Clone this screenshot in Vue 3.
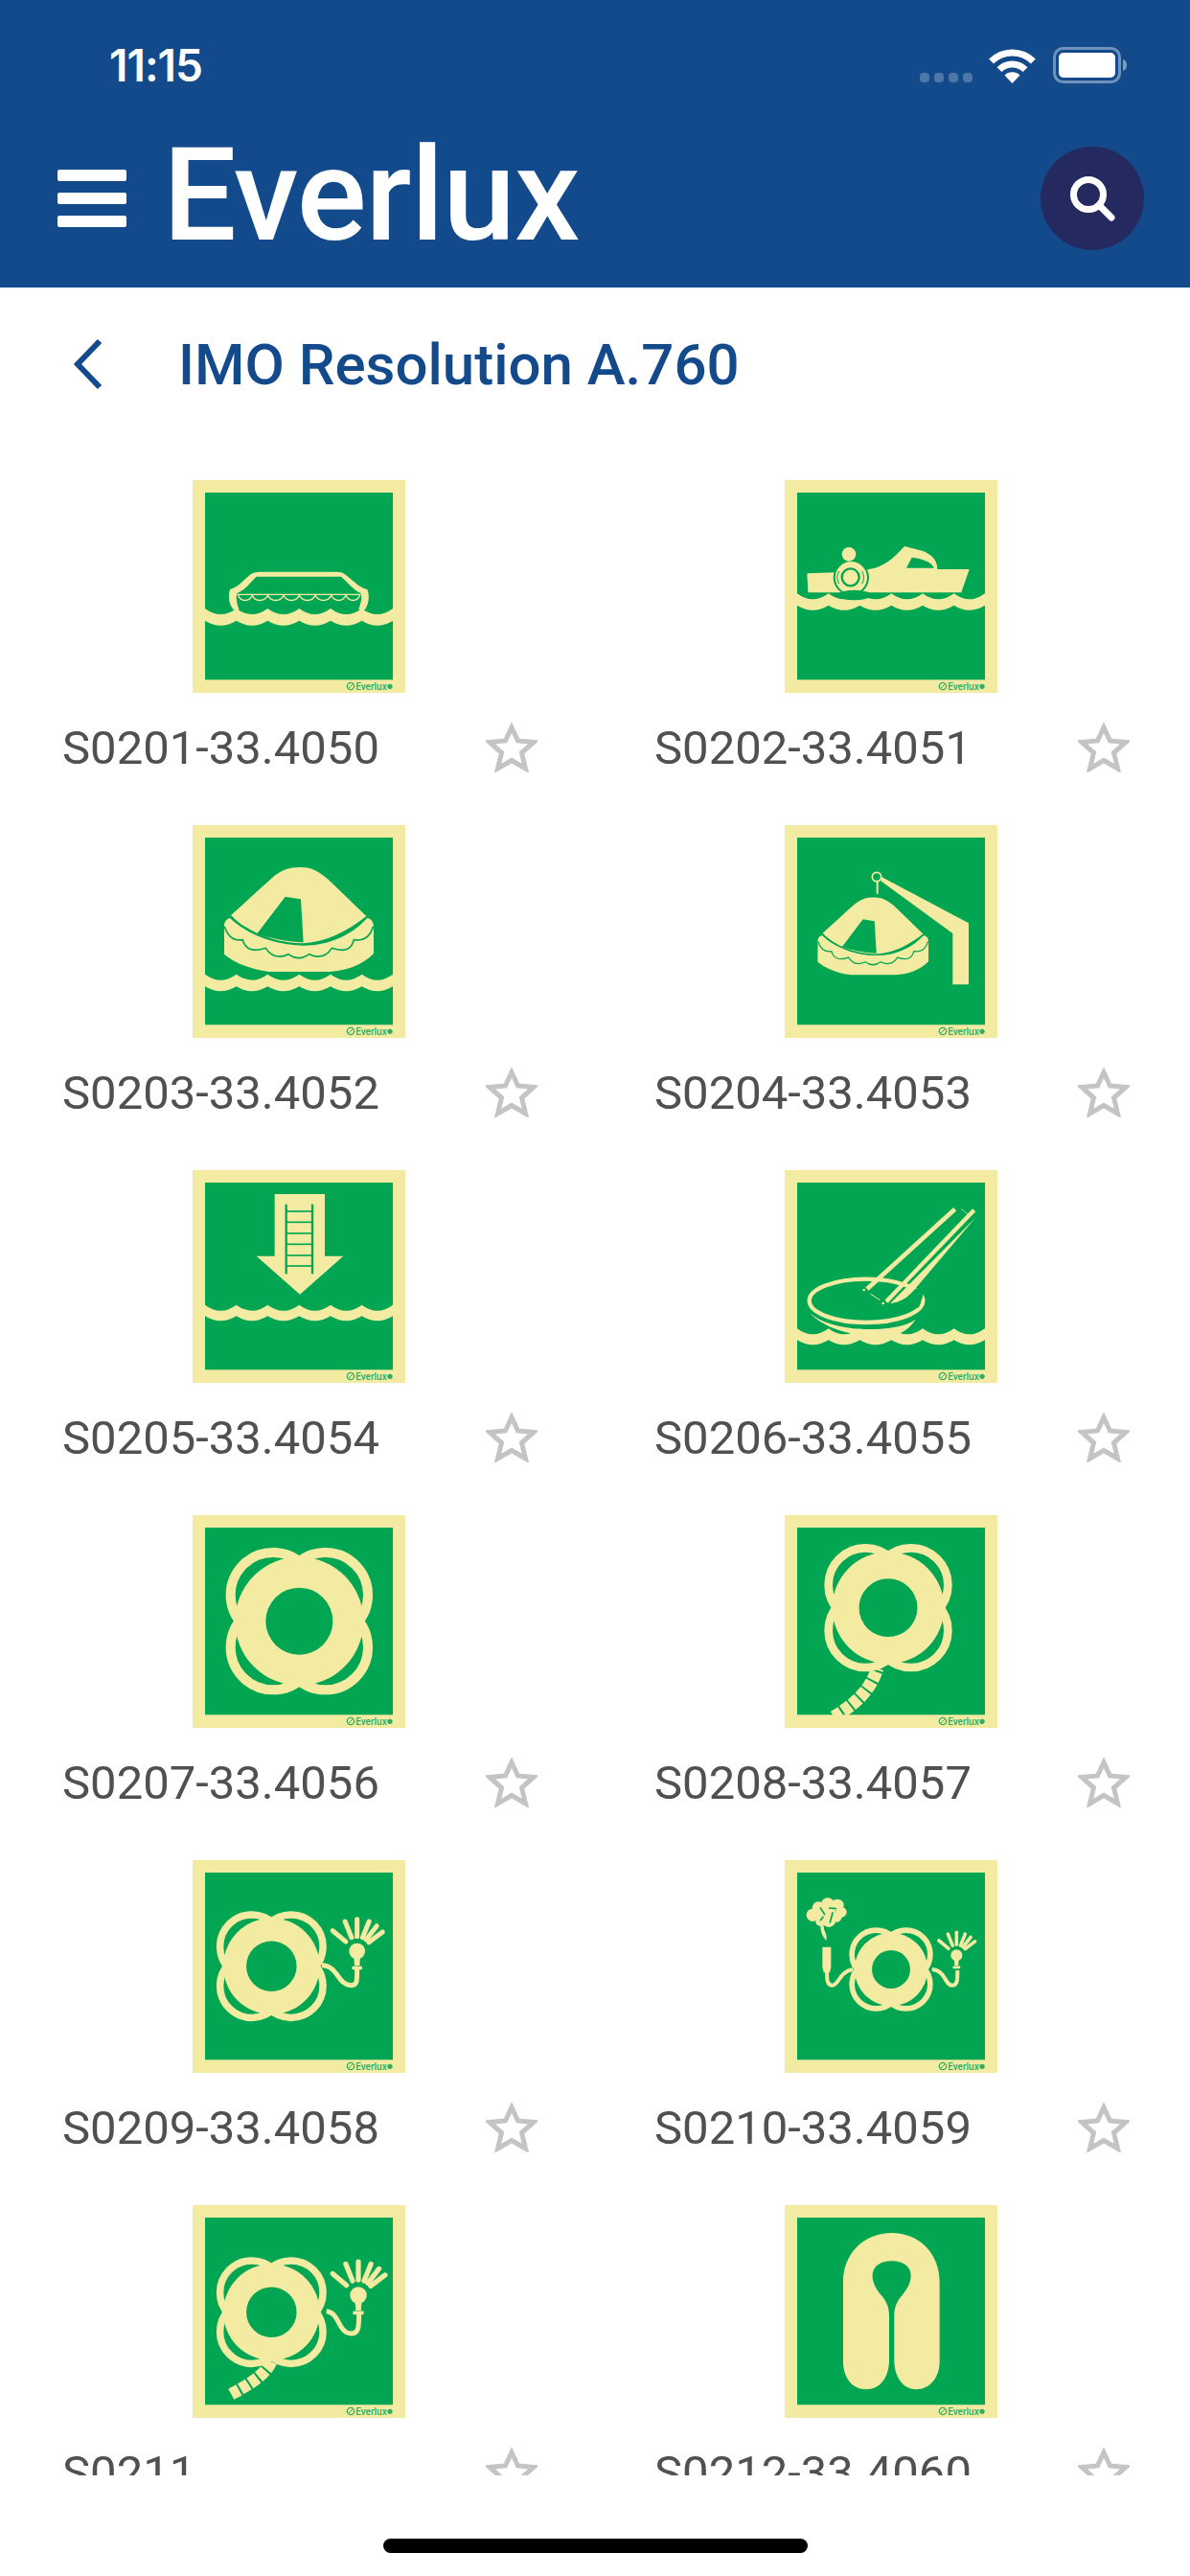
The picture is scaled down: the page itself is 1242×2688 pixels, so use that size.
<script setup>
const Y = '#f4eba3';
const G = '#02a652';

const path = (d, fill = Y) => ({ tag: 'path', attrs: { d, fill } });
const line = (d, w, stroke = Y, cap = 'butt', extra = {}) => ({
  tag: 'path',
  attrs: { d, fill: 'none', stroke, 'stroke-width': w, 'stroke-linecap': cap, ...extra }
});
const circle = (cx, cy, r, fill = Y) => ({ tag: 'circle', attrs: { cx, cy, r, fill } });
const hoop = (cx, cy, r, w, stroke = Y) => ({
  tag: 'circle',
  attrs: { cx, cy, r, fill: 'none', stroke, 'stroke-width': w }
});

// scalloped water band, y = height of the top cusps
const wave = (y, t = 35) => {
  const xs = [39, 137, 235, 334, 432, 530, 627];
  let d = `M39,${y}`;
  for (let i = 1; i < xs.length; i++) {
    d += ` Q${(xs[i - 1] + xs[i]) / 2},${y + 36} ${xs[i]},${y}`;
  }
  d += ` L627,${y + t}`;
  for (let i = xs.length - 2; i >= 0; i--) {
    d += ` Q${(xs[i + 1] + xs[i]) / 2},${y + t + 30} ${xs[i]},${y + t}`;
  }
  return path(d + ' Z');
};

// lifebuoy: four loops behind a disc
const ring = (cx, cy, s) => {
  const o = 82 * s;
  return [
    hoop(cx - o, cy - o, 133 * s, 30 * s),
    hoop(cx + o, cy - o, 133 * s, 30 * s),
    hoop(cx - o, cy + o, 133 * s, 30 * s),
    hoop(cx + o, cy + o, 133 * s, 30 * s),
    circle(cx, cy, 201 * s),
    circle(cx, cy, 105 * s, G)
  ];
};

// light on a lifebuoy, cx/cy is the bulb
const flare = (cx, cy, s) => {
  const rays = [-50, -22, 0, 22, 38, 53].map((a) => {
    const r = (a * Math.PI) / 180;
    const x0 = cx + Math.sin(r) * 46 * s;
    const y0 = cy - Math.cos(r) * 46 * s;
    const x1 = cx + Math.sin(r) * 100 * s;
    const y1 = cy - Math.cos(r) * 100 * s;
    return line(`M${x0},${y0} L${x1},${y1}`, 15 * s, Y, 'round');
  });
  return [
    ...rays,
    circle(cx, cy, 25 * s),
    path(`M${cx - 10 * s},${cy + 15 * s} L${cx + 10 * s},${cy + 15 * s} L${cx + 8 * s},${cy + 46 * s} L${cx - 8 * s},${cy + 46 * s} Z`),
    { tag: 'rect', attrs: { x: cx - 16 * s, y: cy + 47 * s, width: 32 * s, height: 11 * s, rx: 3 * s, fill: Y } }
  ];
};

const rope = (d, w) => line(d, w, Y, 'butt', { 'stroke-dasharray': '28 6' });

const raft = () => [
  path('M120,282 C170,238 215,195 255,160 C290,132 315,132 342,132 C372,132 395,145 425,170 L544,285 C480,335 420,365 347,370 C260,370 170,335 120,282 Z'),
  path('M202,340 L290,224 L339,232 L347,367 C290,365 245,355 202,340 Z', G),
  path('M117,291 C170,342 260,377 347,377 C430,377 500,342 547,291 C562,295 567,305 567,320 L567,402 C530,440 480,455 430,459 L240,459 C175,450 130,430 99,404 L99,315 C99,305 105,294 117,291 Z'),
  line('M100,317 Q115,365 157,359 Q170,405 229,385 Q255,425 300,404 Q332,428 365,404 Q410,425 436,385 Q495,405 505,359 Q552,365 565,317', 5, G)
];

const lifeboat = [
  path('M117,342 C145,335 165,305 187,292 Q195,287 210,287 L450,287 Q470,287 480,297 L520,330 Q535,340 547,342 C556,365 550,390 540,405 L128,405 C114,390 110,365 117,342 Z'),
  path('M139,354 C165,345 180,320 200,302 L465,302 C485,320 505,345 527,354 C532,370 525,395 515,415 L150,415 C140,395 134,370 139,354 Z', G),
  line('M139,358 L527,358', 4),
  line('M143,360 C150,382 178,382 187,360 C195,382 225,382 236,360 C245,382 275,382 285,360 C295,382 325,382 334,360 C345,382 375,382 384,360 C395,382 425,382 434,360 C445,382 470,382 480,360 C490,382 515,382 524,360', 4),
  wave(402, 38)
];

const rescueBoat = [
  path('M70,292 L160,289 L260,280 C315,272 345,240 375,207 L433,222 C465,235 478,255 478,279 L578,279 L553,352 L73,352 Z'),
  path('M381,275 L398,242 C430,245 458,255 468,275 Z', G),
  circle(208, 305, 56, G),
  circle(201, 232, 22),
  circle(208, 305, 50),
  hoop(206, 304, 27, 7, G),
  line('M170,285 A40,40 0 0 0 170,325', 3, G),
  line('M242,285 A40,40 0 0 1 242,325', 3, G),
  wave(355, 37),
  { tag: 'ellipse', attrs: { cx: 218, cy: 360, rx: 52, ry: 16, fill: G } }
];

const crane = [
  ...raft().map((e) => ({ ...e, attrs: { ...e.attrs, transform: 'translate(30 129) scale(.741)' } })),
  path('M303,162 L576,307 L576,499 L526,499 L526,339 L301,175 Z'),
  hoop(288, 162, 14, 5),
  line('M290,177 L290,215', 6)
];

const ladder = [
  path('M257,75 L414,75 L414,269 L472,269 L336,389 L200,269 L257,269 Z'),
  line('M293,107 L293,325', 7, G),
  line('M375,107 L375,325', 7, G),
  ...[129, 163, 198, 232, 267, 300].map((y) => line(`M293,${y} L375,${y}`, 5, G)),
  wave(422)
];

const chute = [
  path('M78,447 C120,490 200,525 330,520 C370,515 395,490 410,467 C370,495 300,500 240,497 C170,495 110,475 78,447 Z'),
  { tag: 'ellipse', attrs: { cx: 255, cy: 409, rx: 178, ry: 68, fill: 'none', stroke: Y, 'stroke-width': 13 } },
  path('M250,362 L440,372 L420,430 L300,440 Z', G),
  line('M258,372 L533,122', 14),
  line('M318,412 L593,125', 13),
  path('M598,148 L408,372 C380,405 360,412 330,418 Z'),
  circle(248, 375, 4),
  circle(308, 417, 4),
  line('M268,387 L298,407', 3),
  line('M553,122 L573,137', 2),
  wave(496, 36)
];

const buoyRope = [
  rope('M154,632 C205,600 265,560 290,480', 40),
  ...ring(324, 290, 0.87)
];

const buoyLight = [
  line('M405,329 C455,330 455,392 497,392 C515,392 515,380 515,342', 15),
  ...flare(515, 285, 1),
  ...ring(247, 332, 0.75)
];

const buoyTwo = [
  line('M461,342 C505,345 500,392 525,392 C541,392 541,375 541,345', 12),
  line('M213,342 C170,350 170,390 150,392 C133,392 132,375 132,350', 12),
  ...flare(538, 298, 0.72),
  ...ring(333, 342, 0.57),
  path('M118,272 L145,272 L145,335 L141,352 L122,352 L118,335 Z'),
  circle(88, 172, 20),
  circle(106, 150, 20),
  circle(135, 140, 22),
  circle(165, 142, 20),
  circle(178, 163, 16),
  circle(163, 178, 16),
  circle(138, 188, 22),
  circle(112, 192, 15),
  circle(130, 165, 28),
  path('M122,205 C122,225 135,232 130,252 C118,238 112,225 112,205 Z'),
  line('M112,150 L125,170 M140,150 L160,152 M150,165 L142,195 M120,178 L112,188', 5, G, 'round')
];

const buoyRopeLight = [
  rope('M121,592 C170,565 235,530 250,480', 38),
  line('M419,332 C460,335 455,402 497,402 C520,402 521,380 521,340', 15),
  ...flare(519, 282, 1.05),
  ...ring(247, 335, 0.75)
];

const jacket = [
  path('M183,240 C183,150 250,87 335,87 C420,87 485,150 485,240 L485,490 C485,545 450,577 412,577 C375,577 345,545 343,490 L343,345 C343,330 345,310 365,285 C412,235 405,175 335,175 C265,175 258,235 305,285 C325,310 327,330 327,345 L327,490 C325,545 295,577 255,577 C215,577 183,545 183,490 Z')
];

const items = [
  { id: 1, code: 'S0201-33.4050', art: lifeboat },
  { id: 2, code: 'S0202-33.4051', art: rescueBoat },
  { id: 3, code: 'S0203-33.4052', art: [...raft(), wave(467, 38)] },
  { id: 4, code: 'S0204-33.4053', art: crane },
  { id: 5, code: 'S0205-33.4054', art: ladder },
  { id: 6, code: 'S0206-33.4055', art: chute },
  { id: 7, code: 'S0207-33.4056', art: ring(334, 332, 1) },
  { id: 8, code: 'S0208-33.4057', art: buoyRope },
  { id: 9, code: 'S0209-33.4058', art: buoyLight },
  { id: 10, code: 'S0210-33.4059', art: buoyTwo },
  { id: 11, code: 'S0211', art: buoyRopeLight },
  { id: 12, code: 'S0212-33.4060', art: jacket }
];
</script>

<template>
  <div class="screen">
    <header class="top">
      <div class="status">
        <span class="time">11:15</span>
        <div class="status-icons">
          <div class="dots">
            <i></i><i></i><i></i><i></i>
          </div>
          <svg class="wifi" width="49" height="37" viewBox="0 0 49 37">
            <path d="M2.6,14.1 A31,31 0 0 1 46.4,14.1" fill="none" stroke="#fff" stroke-width="7" />
            <path d="M11,22.6 A19,19 0 0 1 38,22.6" fill="none" stroke="#fff" stroke-width="7" />
            <path d="M24.5,37 L16.5,28.5 A11.3,11.3 0 0 1 32.5,28.5 Z" fill="#fff" />
          </svg>
          <svg class="battery" width="78" height="38" viewBox="0 0 78 38">
            <rect x="1.5" y="1.5" width="68" height="35" rx="9" fill="none" stroke="#fff" stroke-opacity=".4" stroke-width="3" />
            <rect x="6" y="6" width="59" height="26" rx="5" fill="#fff" />
            <path d="M73,13 C76,14 77,16 77,19 C77,22 76,24 73,25 Z" fill="#fff" fill-opacity=".45" />
          </svg>
        </div>
      </div>
      <div class="nav">
        <div class="burger">
          <i></i><i></i><i></i>
        </div>
        <span class="logo">Everlux</span>
        <button class="search">
          <svg width="48" height="48" viewBox="0 0 48 48">
            <circle cx="20" cy="20" r="15.5" fill="none" stroke="#fff" stroke-width="7" />
            <path d="M31,31 L44,44" stroke="#fff" stroke-width="7" stroke-linecap="round" />
          </svg>
        </button>
      </div>
    </header>

    <div class="title-row">
      <svg class="back" width="32" height="54" viewBox="0 0 32 54">
        <path d="M28,3 L5,27 L28,51" fill="none" stroke="#134a8c" stroke-width="6" />
      </svg>
      <h1 class="title">IMO Resolution A.760</h1>
    </div>

    <div class="list">
      <div v-for="item in items" :key="item.id" class="item">
        <svg class="sign" width="222" height="222" viewBox="0 0 666 666">
          <rect width="666" height="666" fill="#f4eba3" />
          <rect x="39" y="39" width="588" height="586" fill="#02a652" />
          <component :is="el.tag" v-for="(el, i) in item.art" :key="i" v-bind="el.attrs" />
          <circle cx="495" cy="645" r="11" fill="none" stroke="#2fae5e" stroke-width="4" />
          <path d="M488,652 L502,638" stroke="#2fae5e" stroke-width="3" />
          <text class="mark" x="608" y="656">Everlux</text>
          <circle cx="618" cy="646" r="8" fill="#2fae5e" />
        </svg>
        <div class="label">
          <span class="code">{{ item.code }}</span>
          <svg class="star" width="54" height="52" viewBox="0 0 54 52">
            <polygon points="27,5 33.5,19 50,20.5 37.5,31.5 41.5,48 27,39.5 12.5,48 16.5,31.5 4,20.5 20.5,19" fill="none" stroke="#c4c4c4" stroke-width="5" />
          </svg>
        </div>
      </div>
    </div>

    <div class="home">
      <div class="home-bar"></div>
    </div>
  </div>
</template>

<style scoped>
.screen {
  width: 1242px;
  height: 2688px;
  display: flex;
  flex-direction: column;
  background: #fff;
  font-family: Roboto, sans-serif;
  overflow: hidden;
}

.top {
  height: 300px;
  background: #134a8c;
  color: #fff;
}

.status {
  height: 136px;
  display: flex;
  align-items: center;
  justify-content: space-between;
  padding: 0 65px 0 114px;
}

.time {
  font-family: Inter, sans-serif;
  font-size: 46px;
  font-weight: 600;
  letter-spacing: -1px;
}

.status-icons {
  display: flex;
  align-items: center;
}

.dots {
  display: flex;
  gap: 5px;
  margin: 26px 17px 0 0;
}

.dots i {
  width: 10px;
  height: 10px;
  border-radius: 4px;
  background: #4d76a9;
}

.battery {
  margin-left: 18px;
}

.nav {
  height: 142px;
  display: flex;
  align-items: center;
  padding: 0 48px 0 60px;
}

.burger {
  display: flex;
  flex-direction: column;
  gap: 12px;
}

.burger i {
  display: block;
  width: 72px;
  height: 12px;
  border-radius: 2px;
  background: #fff;
}

.logo {
  margin: -6px 0 0 38px;
  font-size: 136px;
  line-height: 1;
  font-weight: 500;
  letter-spacing: -1px;
}

.search {
  width: 108px;
  height: 108px;
  margin-left: auto;
  padding: 0;
  border: none;
  border-radius: 50%;
  background: #242a60;
  display: flex;
  align-items: center;
  justify-content: center;
}

.title-row {
  height: 160px;
  display: flex;
  align-items: center;
  padding-left: 76px;
}

.title {
  margin: 0 0 0 78px;
  font-size: 60px;
  font-weight: 500;
  color: #134a8c;
}

.list {
  height: 2123px;
  box-sizing: border-box;
  padding: 41px 3px 0;
  overflow: hidden;
  display: grid;
  grid-template-columns: repeat(2, 618px);
  grid-auto-rows: 336px;
  row-gap: 24px;
}

.item {
  display: flex;
  flex-direction: column;
  align-items: center;
}

.sign {
  display: block;
  flex: none;
}

.mark {
  font-family: Roboto, sans-serif;
  font-size: 30px;
  font-weight: 500;
  text-anchor: end;
  fill: #2fae5e;
}

.label {
  align-self: stretch;
  height: 114px;
  display: flex;
  align-items: center;
  justify-content: space-between;
  padding: 0 60px 0 62px;
}

.code {
  font-size: 49px;
  color: #505050;
}

.home {
  flex: 1;
  display: flex;
  align-items: flex-end;
  justify-content: center;
  padding-bottom: 24px;
}

.home-bar {
  width: 443px;
  height: 15px;
  border-radius: 8px;
  background: #000;
}
</style>
